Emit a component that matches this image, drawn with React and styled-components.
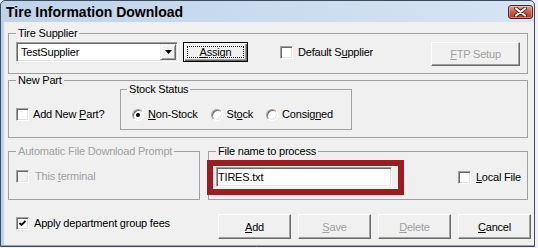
import React from 'react'
import styled, { createGlobalStyle } from 'styled-components'

const GlobalStyle = createGlobalStyle`
  html, body {
    margin: 0;
    padding: 0;
    background: #eef2f7;
  }
  body {
    font-family: "Liberation Sans", Arial, sans-serif;
    font-size: 11px;
    letter-spacing: -0.2px;
    color: #000;
  }
`

const Window = styled.div`
  width: 535px;
  height: 247px;
  box-sizing: border-box;
  border: 1px solid #3c4c5e;
  border-radius: 5px 5px 0 0;
  background: linear-gradient(to right, #bed3ea, #d6e4f3);
  padding: 0 0 1px 3px;
  display: flex;
  flex-direction: column;
  box-shadow: inset 0 -1px 0 #3ec3ee;
`

const TitleBar = styled.div`
  height: 21px;
  flex: none;
  display: flex;
  align-items: flex-start;
  justify-content: space-between;
  padding: 0 1px 0 2px;
`

const Title = styled.div`
  padding-top: 3px;
  line-height: 16px;
  font-size: 14px;
  font-weight: bold;
  letter-spacing: 0;
`

const CloseButton = styled.div`
  width: 25px;
  height: 14px;
  margin-top: 4px;
  box-sizing: border-box;
  border: 1px solid #5a1f1a;
  border-radius: 3px;
  background: linear-gradient(#e2a196, #cc5a4a 50%, #b5361f);
  box-shadow: inset 0 0 0 1px rgba(255, 255, 255, 0.35);
  display: flex;
  align-items: center;
  justify-content: center;
`

const Body = styled.div`
  flex: 1;
  background: #f0f0f0;
  padding: 5px 3px 0 4px;
`

const Group = styled.fieldset`
  margin: 0;
  padding: 0;
  min-width: 0;
  width: ${p => p.$w}px;
  box-sizing: border-box;
  border: 1px solid #a0a0a0;
`

const Caption = styled.legend`
  margin-left: ${p => p.$indent ?? 7}px;
  padding: 0 2px;
  line-height: 13px;
  color: ${p => (p.$disabled ? '#a0a0a0' : '#000')};
`

const SupplierRow = styled.div`
  height: 33px;
  box-sizing: border-box;
  padding: 2px 7px 0 7px;
  display: flex;
  align-items: flex-start;
`

const Combo = styled.div`
  width: 162px;
  height: 20px;
  box-sizing: border-box;
  background: #fff;
  border: 1px solid;
  border-color: #a0a0a0 #fff #fff #a0a0a0;
  box-shadow: inset 1px 1px #696969, inset -1px -1px #e3e3e3;
  display: flex;
  align-items: center;
  justify-content: space-between;
  padding: 0 1px 0 4px;
`

const DropButton = styled.div`
  width: 16px;
  height: 16px;
  box-sizing: border-box;
  background: #f0f0f0;
  border: 1px solid;
  border-color: #f0f0f0 #696969 #696969 #f0f0f0;
  box-shadow: inset 1px 1px #fff, inset -1px -1px #a0a0a0;
  display: flex;
  align-items: center;
  justify-content: center;
`

const Button = styled.button`
  width: ${p => p.$w}px;
  height: ${p => p.$h}px;
  margin: ${p => p.$m || '0'};
  padding: 0;
  box-sizing: border-box;
  font: inherit;
  letter-spacing: inherit;
  color: ${p => (p.disabled ? '#a0a0a0' : '#000')};
  background: #f0f0f0;
  border: 1px solid;
  border-color: #fff #696969 #696969 #fff;
  box-shadow: inset -1px -1px #a0a0a0;
  flex: none;
`

const DefaultButton = styled(Button)`
  border-color: #000;
  box-shadow: inset 1px 1px #fff, inset -1px -1px #696969, inset -2px -2px #a0a0a0;
  padding: 3px;
  display: flex;
`

const FocusRing = styled.span`
  flex: 1;
  border: 1px dotted #000;
  display: flex;
  align-items: center;
  justify-content: center;
`

const CheckItem = styled.label`
  display: flex;
  align-items: center;
  gap: ${p => p.$gap ?? 4}px;
  margin: ${p => p.$m || '0'};
  line-height: 13px;
  color: ${p => (p.$disabled ? '#a0a0a0' : '#000')};
  white-space: nowrap;
`

const Box = styled.span`
  width: 13px;
  height: 13px;
  box-sizing: border-box;
  flex: none;
  background: ${p => (p.$disabled ? '#f0f0f0' : '#fff')};
  border: 1px solid;
  border-color: #a0a0a0 #fff #fff #a0a0a0;
  box-shadow: inset 1px 1px #696969, inset -1px -1px #e3e3e3;
  display: flex;
  align-items: center;
  justify-content: center;
`

const Radio = styled.span`
  width: 12px;
  height: 12px;
  box-sizing: border-box;
  flex: none;
  border-radius: 50%;
  background: #fff;
  border: 1px solid;
  border-color: #a0a0a0 #fff #fff #a0a0a0;
  box-shadow: inset 1px 1px #696969, inset -1px -1px #e3e3e3;
  display: flex;
  align-items: center;
  justify-content: center;

  &::after {
    content: '';
    width: 4px;
    height: 4px;
    border-radius: 50%;
    background: ${p => (p.$checked ? '#000' : 'transparent')};
  }
`

const PartRow = styled.div`
  height: 54px;
  margin-top: -4px;
  box-sizing: border-box;
  padding-left: 7px;
  display: flex;
  align-items: flex-start;
`

const PartColumn = styled.div`
  width: 104px;
  padding-top: 25px;
`

const RadioRow = styled.div`
  height: 33px;
  box-sizing: border-box;
  padding: 12px 0 8px 11px;
  display: flex;
  align-items: center;
  gap: 13px;
`

const SplitRow = styled.div`
  margin-top: 7px;
  display: flex;
  gap: 8px;
`

const PromptBody = styled.div`
  height: 41px;
  box-sizing: border-box;
  padding: 12px 0 0 7px;
`

const FileBody = styled.div`
  height: 41px;
  box-sizing: border-box;
  padding: 2px 6px 0 0;
  display: flex;
  align-items: flex-start;
  justify-content: space-between;
`

const Highlight = styled.div`
  border: 6px solid #9e1b22;
  padding: 1px 6px 2px 3px;
  margin-left: -2px;
`

const TextField = styled.input`
  display: block;
  width: 176px;
  height: 20px;
  box-sizing: border-box;
  margin: 0;
  padding: 0 1px;
  font: inherit;
  letter-spacing: inherit;
  color: #000;
  background: #fff;
  border: 1px solid;
  border-color: #a0a0a0 #fff #fff #a0a0a0;
  box-shadow: inset 1px 1px #696969, inset -1px -1px #e3e3e3;
  outline: none;
`

const FooterRow = styled.div`
  margin-top: 14px;
  display: flex;
  align-items: flex-start;
`

const ButtonGroup = styled.div`
  margin-left: auto;
  display: flex;
  gap: 7px;
`

const Check = ({ checked, disabled }) => (
  <Box $disabled={disabled}>
    {checked && (
      <svg width="7" height="7" viewBox="0 0 7 7">
        <path d="M0.5 3 L2.5 5 L6.5 1" fill="none" stroke="#000" strokeWidth="1.8" />
      </svg>
    )}
  </Box>
)

const App = () => {
  return (
    <>
      <GlobalStyle />
      <Window>
        <TitleBar>
          <Title>Tire Information Download</Title>
          <CloseButton>
            <svg width="15" height="10" viewBox="0 0 15 10">
              <path d="M3 1.5 L12 8.5 M12 1.5 L3 8.5" stroke="#4a1a14" strokeWidth="3.8" strokeLinecap="round" />
              <path d="M3 1.5 L12 8.5 M12 1.5 L3 8.5" stroke="#fff" strokeWidth="2.2" strokeLinecap="round" />
            </svg>
          </CloseButton>
        </TitleBar>
        <Body>
          <Group $w={520}>
            <Caption>Tire Supplier</Caption>
            <SupplierRow>
              <Combo>
                <span>TestSupplier</span>
                <DropButton>
                  <svg width="7" height="4" viewBox="0 0 7 4">
                    <path d="M0 0 H7 L3.5 4 Z" fill="#000" />
                  </svg>
                </DropButton>
              </Combo>
              <DefaultButton $w={65} $h={20} $m="0 0 0 5px">
                <FocusRing><u>A</u>ssign</FocusRing>
              </DefaultButton>
              <CheckItem $gap={5} $m="4px 0 0 32px">
                <Check />
                <span>Default S<u>u</u>pplier</span>
              </CheckItem>
              <Button $w={89} $h={24} $m="0 0 0 auto" disabled>
                <u>F</u>TP Setup
              </Button>
            </SupplierRow>
          </Group>

          <Group $w={520}>
            <Caption>New Part</Caption>
            <PartRow>
              <PartColumn>
                <CheckItem>
                  <Check />
                  <span>Add New <u>P</u>art?</span>
                </CheckItem>
              </PartColumn>
              <Group $w={232}>
                <Caption $indent={6}>Stock Status</Caption>
                <RadioRow>
                  <CheckItem>
                    <Radio $checked />
                    <span><u>N</u>on-Stock</span>
                  </CheckItem>
                  <CheckItem>
                    <Radio />
                    <span>St<u>o</u>ck</span>
                  </CheckItem>
                  <CheckItem>
                    <Radio />
                    <span>Consig<u>n</u>ed</span>
                  </CheckItem>
                </RadioRow>
              </Group>
            </PartRow>
          </Group>

          <SplitRow>
            <Group $w={192}>
              <Caption $disabled>Automatic File Download Prompt</Caption>
              <PromptBody>
                <CheckItem $gap={6} $disabled>
                  <Check disabled />
                  <span>This <u>t</u>erminal</span>
                </CheckItem>
              </PromptBody>
            </Group>
            <Group $w={320}>
              <Caption>File name to process</Caption>
              <FileBody>
                <Highlight>
                  <TextField readOnly value="TIRES.txt" />
                </Highlight>
                <CheckItem $gap={5} $m="11px 0 0 0">
                  <Check />
                  <span><u>L</u>ocal File</span>
                </CheckItem>
              </FileBody>
            </Group>
          </SplitRow>

          <FooterRow>
            <CheckItem $gap={5} $m="3px 0 0 8px">
              <Check checked />
              <span>Apply department group fees</span>
            </CheckItem>
            <ButtonGroup>
              <Button $w={73} $h={25}><u>A</u>dd</Button>
              <Button $w={73} $h={25} disabled><u>S</u>ave</Button>
              <Button $w={73} $h={25} disabled><u>D</u>elete</Button>
              <Button $w={73} $h={25}><u>C</u>ancel</Button>
            </ButtonGroup>
          </FooterRow>
        </Body>
      </Window>
    </>
  )
}

export default App
